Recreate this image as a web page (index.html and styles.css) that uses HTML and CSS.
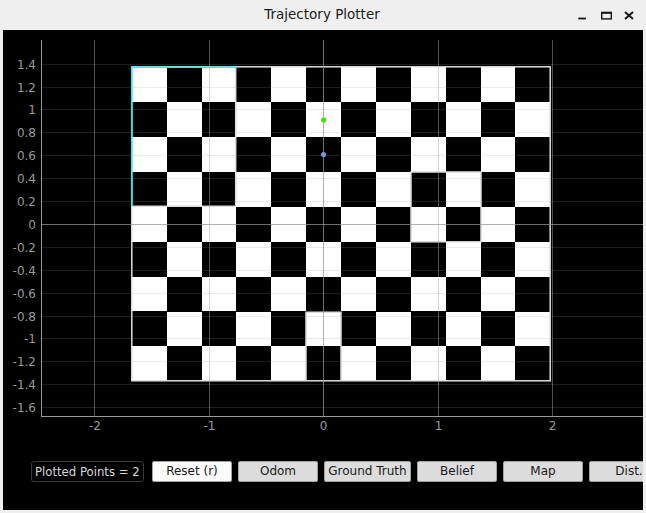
FILE: index.html
```html
<!DOCTYPE html>
<html>
<head>
<meta charset="utf-8">
<title>Trajectory Plotter</title>
<link rel="stylesheet" href="styles.css">
</head>
<body>
<div class="window">
  <div class="titlebar">
    <div class="title">Trajectory Plotter</div>
    <svg class="wincontrols" width="58" height="30" viewBox="578 0 58 30">
      <rect class="wc" x="578.3" y="17.6" width="7.6" height="1.8"/>
      <rect class="wc-outline" x="601.7" y="12.7" width="9.6" height="6.2"/>
      <rect class="wc" x="601" y="11.7" width="11" height="2"/>
      <path class="wc-x" d="M625 12 L633 19 M633 12 L625 19"/>
    </svg>
  </div>
  <div class="content">
    <svg class="plot" width="640" height="410" viewBox="3 30 640 410">
      <defs>
        <g id="row-even">
          <rect x="167" y="0" width="35" height="35"/>
          <rect x="236" y="0" width="35" height="35"/>
          <rect x="306" y="0" width="35" height="35"/>
          <rect x="376" y="0" width="35" height="35"/>
          <rect x="446" y="0" width="35" height="35"/>
          <rect x="515" y="0" width="35" height="35"/>
        </g>
        <g id="row-odd">
          <rect x="131" y="0" width="36" height="35"/>
          <rect x="202" y="0" width="34" height="35"/>
          <rect x="271" y="0" width="35" height="35"/>
          <rect x="341" y="0" width="35" height="35"/>
          <rect x="411" y="0" width="35" height="35"/>
          <rect x="481" y="0" width="34" height="35"/>
        </g>
      </defs>

      <!-- map board -->
      <rect class="board" x="131" y="67" width="419" height="314"/>
      <g class="cells">
        <use href="#row-even" y="67"/>
        <use href="#row-odd" y="102"/>
        <use href="#row-even" y="137"/>
        <use href="#row-odd" y="172"/>
        <use href="#row-even" y="207"/>
        <use href="#row-odd" y="242"/>
        <use href="#row-even" y="277"/>
        <use href="#row-odd" y="311"/>
        <use href="#row-even" y="346"/>
      </g>
      <rect class="tile-border" x="131.8" y="66.8" width="418.4" height="314"/>
      <path class="tile-border" d="M131 206.3 H235.7 V67"/>
      <rect class="tile-border" x="411" y="172" width="70" height="69.8"/>
      <path class="tile-border" d="M306 381 V312.3 H341 V381"/>
      <path class="tile-select" d="M131.8 206 V67.2 H236"/>

      <!-- horizontal grid -->
      <g class="grid-h">
        <line x1="41" x2="643" y1="64.5" y2="64.5"/>
        <line x1="41" x2="643" y1="87.5" y2="87.5"/>
        <line x1="41" x2="643" y1="109.5" y2="109.5"/>
        <line x1="41" x2="643" y1="132.5" y2="132.5"/>
        <line x1="41" x2="643" y1="155.5" y2="155.5"/>
        <line x1="41" x2="643" y1="178.5" y2="178.5"/>
        <line x1="41" x2="643" y1="201.5" y2="201.5"/>
        <line x1="41" x2="643" y1="247.5" y2="247.5"/>
        <line x1="41" x2="643" y1="270.5" y2="270.5"/>
        <line x1="41" x2="643" y1="293.5" y2="293.5"/>
        <line x1="41" x2="643" y1="316.5" y2="316.5"/>
        <line x1="41" x2="643" y1="338.5" y2="338.5"/>
        <line x1="41" x2="643" y1="361.5" y2="361.5"/>
        <line x1="41" x2="643" y1="384.5" y2="384.5"/>
        <line x1="41" x2="643" y1="407.5" y2="407.5"/>
      </g>
      <g class="grid-v">
        <line x1="94.5" x2="94.5" y1="40" y2="416"/>
        <line x1="209.5" x2="209.5" y1="40" y2="416"/>
        <line x1="438.5" x2="438.5" y1="40" y2="416"/>
        <line x1="552.5" x2="552.5" y1="40" y2="416"/>
      </g>
      <g class="grid-zero">
        <line x1="41" x2="643" y1="224.5" y2="224.5"/>
        <line x1="323.5" x2="323.5" y1="40" y2="416"/>
      </g>

      <!-- axes -->
      <g class="axis">
        <line x1="41.5" x2="41.5" y1="40" y2="417"/>
        <line x1="41" x2="643" y1="416.5" y2="416.5"/>
      </g>

      <!-- trajectory points -->
      <circle class="pt-truth" cx="323.6" cy="120" r="2.6"/>
      <circle class="pt-odom" cx="323.6" cy="154.6" r="2.6"/>

      <!-- tick labels -->
      <g class="tick tick-y">
        <text x="36" y="69">1.4</text>
        <text x="36" y="92">1.2</text>
        <text x="36" y="114">1</text>
        <text x="36" y="137">0.8</text>
        <text x="36" y="160">0.6</text>
        <text x="36" y="183">0.4</text>
        <text x="36" y="206">0.2</text>
        <text x="36" y="229">0</text>
        <text x="36" y="252">-0.2</text>
        <text x="36" y="275">-0.4</text>
        <text x="36" y="298">-0.6</text>
        <text x="36" y="321">-0.8</text>
        <text x="36" y="343">-1</text>
        <text x="36" y="366">-1.2</text>
        <text x="36" y="389">-1.4</text>
        <text x="36" y="412">-1.6</text>
      </g>
      <g class="tick tick-x">
        <text x="95" y="430">-2</text>
        <text x="209.5" y="430">-1</text>
        <text x="323.5" y="430">0</text>
        <text x="438.5" y="430">1</text>
        <text x="552.5" y="430">2</text>
      </g>
    </svg>

    <div class="controls">
      <div class="counter">Plotted Points = 2</div>
      <button class="btn btn-default">Reset (r)</button>
      <button class="btn">Odom</button>
      <button class="btn btn-wide">Ground Truth</button>
      <button class="btn">Belief</button>
      <button class="btn">Map</button>
      <button class="btn">Dist.</button>
    </div>
  </div>
</div>
</body>
</html>
```

FILE: styles.css
```css
html, body {
  margin: 0;
  padding: 0;
  background: #efefef;
}

.window {
  width: 646px;
  height: 513px;
  background: #efefef;
  overflow: hidden;
  font-family: "DejaVu Sans", "Liberation Sans", sans-serif;
}

.titlebar {
  height: 30px;
  display: grid;
  grid-template-columns: 1fr auto 1fr;
  align-items: center;
}

.title {
  grid-column: 2;
  font-size: 13.5px;
  color: #1c1c1c;
  padding-bottom: 2px;
  margin-left: -2px;
}

.wincontrols {
  grid-column: 3;
  justify-self: end;
  margin-right: 10px;
  display: block;
}

.wc {
  fill: #151515;
}

.wc-outline {
  fill: none;
  stroke: #151515;
  stroke-width: 1.4;
}

.wc-x {
  fill: none;
  stroke: #151515;
  stroke-width: 2;
}

.content {
  margin: 0 3px;
  height: 480px;
  background: #000;
  display: flex;
  flex-direction: column;
  overflow: hidden;
}

.plot {
  display: block;
  flex-shrink: 0;
}

.board {
  fill: #fff;
}

.cells {
  fill: #000;
}

.tile-border {
  fill: none;
  stroke: #dcdcdc;
  stroke-width: 1.5;
}

.tile-select {
  fill: none;
  stroke: #00ffff;
  stroke-width: 1.5;
}

.grid-h line {
  stroke: rgba(150, 150, 150, 0.2);
  stroke-width: 1;
}

.grid-v line {
  stroke: rgba(168, 168, 168, 0.47);
  stroke-width: 1;
}

.grid-zero line {
  stroke: rgba(150, 150, 150, 0.75);
  stroke-width: 1;
}

.axis line {
  stroke: #9a9a9a;
  stroke-width: 1;
}

.pt-truth {
  fill: #44e012;
}

.pt-odom {
  fill: #6b9bd8;
}

.tick {
  font-family: "DejaVu Sans", sans-serif;
  font-size: 12px;
  fill: #9a9a9a;
}

.tick-y {
  text-anchor: end;
}

.tick-x {
  text-anchor: middle;
}

.controls {
  display: flex;
  align-items: center;
  gap: 6px;
  margin-top: 21px;
  padding-left: 28px;
}

.counter {
  flex-shrink: 0;
  box-sizing: border-box;
  width: 113px;
  height: 21px;
  margin-right: 2px;
  padding-left: 3px;
  border: 1px solid #3a3a3a;
  border-radius: 3px;
  color: #dadada;
  font-size: 11.7px;
  line-height: 20px;
  white-space: nowrap;
}

.btn {
  flex-shrink: 0;
  box-sizing: border-box;
  width: 80px;
  height: 21px;
  margin: 0;
  padding: 0;
  border: 1px solid #a3a3a3;
  border-radius: 2px;
  background: #dcdcdc;
  color: #1a1a1a;
  font-family: "DejaVu Sans", sans-serif;
  font-size: 12px;
  line-height: 19px;
  text-align: center;
  white-space: nowrap;
}

.btn-default {
  background: #fbfbfb;
}

.btn-wide {
  width: 87px;
}
```
